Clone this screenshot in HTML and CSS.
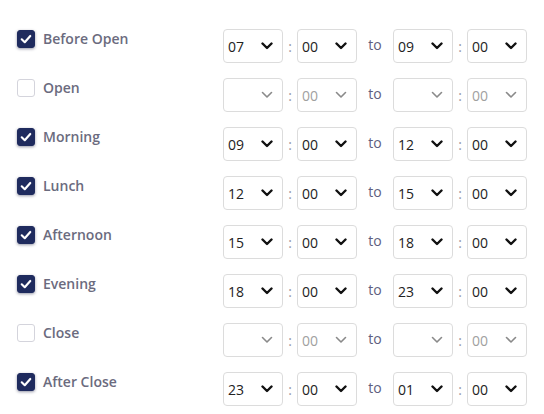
FILE: index.html
```html
<!DOCTYPE html>
<html>
<head>
<meta charset="utf-8">
<link rel="stylesheet" href="styles.css">
</head>
<body>
<div class="list">
  <div class="row">
    <label class="opt"><span class="cb on"><svg viewBox="0 0 18 18"><path d="M4.2 9.3 L7.6 12.6 L13.8 5.6"/></svg></span><span class="lbl">Before Open</span></label>
    <div class="times">
      <div class="sel"><span class="val">07</span><svg class="chev" viewBox="0 0 12 8"><path d="M1.5 1.5 L6 6 L10.5 1.5"/></svg></div>
      <span class="colon">:</span>
      <div class="sel"><span class="val">00</span><svg class="chev" viewBox="0 0 12 8"><path d="M1.5 1.5 L6 6 L10.5 1.5"/></svg></div>
      <span class="to">to</span>
      <div class="sel"><span class="val">09</span><svg class="chev" viewBox="0 0 12 8"><path d="M1.5 1.5 L6 6 L10.5 1.5"/></svg></div>
      <span class="colon">:</span>
      <div class="sel"><span class="val">00</span><svg class="chev" viewBox="0 0 12 8"><path d="M1.5 1.5 L6 6 L10.5 1.5"/></svg></div>
    </div>
  </div>
  <div class="row off">
    <label class="opt"><span class="cb"></span><span class="lbl">Open</span></label>
    <div class="times">
      <div class="sel"><span class="val"></span><svg class="chev" viewBox="0 0 12 8"><path d="M1.5 1.5 L6 6 L10.5 1.5"/></svg></div>
      <span class="colon">:</span>
      <div class="sel"><span class="val">00</span><svg class="chev" viewBox="0 0 12 8"><path d="M1.5 1.5 L6 6 L10.5 1.5"/></svg></div>
      <span class="to">to</span>
      <div class="sel"><span class="val"></span><svg class="chev" viewBox="0 0 12 8"><path d="M1.5 1.5 L6 6 L10.5 1.5"/></svg></div>
      <span class="colon">:</span>
      <div class="sel"><span class="val">00</span><svg class="chev" viewBox="0 0 12 8"><path d="M1.5 1.5 L6 6 L10.5 1.5"/></svg></div>
    </div>
  </div>
  <div class="row">
    <label class="opt"><span class="cb on"><svg viewBox="0 0 18 18"><path d="M4.2 9.3 L7.6 12.6 L13.8 5.6"/></svg></span><span class="lbl">Morning</span></label>
    <div class="times">
      <div class="sel"><span class="val">09</span><svg class="chev" viewBox="0 0 12 8"><path d="M1.5 1.5 L6 6 L10.5 1.5"/></svg></div>
      <span class="colon">:</span>
      <div class="sel"><span class="val">00</span><svg class="chev" viewBox="0 0 12 8"><path d="M1.5 1.5 L6 6 L10.5 1.5"/></svg></div>
      <span class="to">to</span>
      <div class="sel"><span class="val">12</span><svg class="chev" viewBox="0 0 12 8"><path d="M1.5 1.5 L6 6 L10.5 1.5"/></svg></div>
      <span class="colon">:</span>
      <div class="sel"><span class="val">00</span><svg class="chev" viewBox="0 0 12 8"><path d="M1.5 1.5 L6 6 L10.5 1.5"/></svg></div>
    </div>
  </div>
  <div class="row">
    <label class="opt"><span class="cb on"><svg viewBox="0 0 18 18"><path d="M4.2 9.3 L7.6 12.6 L13.8 5.6"/></svg></span><span class="lbl">Lunch</span></label>
    <div class="times">
      <div class="sel"><span class="val">12</span><svg class="chev" viewBox="0 0 12 8"><path d="M1.5 1.5 L6 6 L10.5 1.5"/></svg></div>
      <span class="colon">:</span>
      <div class="sel"><span class="val">00</span><svg class="chev" viewBox="0 0 12 8"><path d="M1.5 1.5 L6 6 L10.5 1.5"/></svg></div>
      <span class="to">to</span>
      <div class="sel"><span class="val">15</span><svg class="chev" viewBox="0 0 12 8"><path d="M1.5 1.5 L6 6 L10.5 1.5"/></svg></div>
      <span class="colon">:</span>
      <div class="sel"><span class="val">00</span><svg class="chev" viewBox="0 0 12 8"><path d="M1.5 1.5 L6 6 L10.5 1.5"/></svg></div>
    </div>
  </div>
  <div class="row">
    <label class="opt"><span class="cb on"><svg viewBox="0 0 18 18"><path d="M4.2 9.3 L7.6 12.6 L13.8 5.6"/></svg></span><span class="lbl">Afternoon</span></label>
    <div class="times">
      <div class="sel"><span class="val">15</span><svg class="chev" viewBox="0 0 12 8"><path d="M1.5 1.5 L6 6 L10.5 1.5"/></svg></div>
      <span class="colon">:</span>
      <div class="sel"><span class="val">00</span><svg class="chev" viewBox="0 0 12 8"><path d="M1.5 1.5 L6 6 L10.5 1.5"/></svg></div>
      <span class="to">to</span>
      <div class="sel"><span class="val">18</span><svg class="chev" viewBox="0 0 12 8"><path d="M1.5 1.5 L6 6 L10.5 1.5"/></svg></div>
      <span class="colon">:</span>
      <div class="sel"><span class="val">00</span><svg class="chev" viewBox="0 0 12 8"><path d="M1.5 1.5 L6 6 L10.5 1.5"/></svg></div>
    </div>
  </div>
  <div class="row">
    <label class="opt"><span class="cb on"><svg viewBox="0 0 18 18"><path d="M4.2 9.3 L7.6 12.6 L13.8 5.6"/></svg></span><span class="lbl">Evening</span></label>
    <div class="times">
      <div class="sel"><span class="val">18</span><svg class="chev" viewBox="0 0 12 8"><path d="M1.5 1.5 L6 6 L10.5 1.5"/></svg></div>
      <span class="colon">:</span>
      <div class="sel"><span class="val">00</span><svg class="chev" viewBox="0 0 12 8"><path d="M1.5 1.5 L6 6 L10.5 1.5"/></svg></div>
      <span class="to">to</span>
      <div class="sel"><span class="val">23</span><svg class="chev" viewBox="0 0 12 8"><path d="M1.5 1.5 L6 6 L10.5 1.5"/></svg></div>
      <span class="colon">:</span>
      <div class="sel"><span class="val">00</span><svg class="chev" viewBox="0 0 12 8"><path d="M1.5 1.5 L6 6 L10.5 1.5"/></svg></div>
    </div>
  </div>
  <div class="row off">
    <label class="opt"><span class="cb"></span><span class="lbl">Close</span></label>
    <div class="times">
      <div class="sel"><span class="val"></span><svg class="chev" viewBox="0 0 12 8"><path d="M1.5 1.5 L6 6 L10.5 1.5"/></svg></div>
      <span class="colon">:</span>
      <div class="sel"><span class="val">00</span><svg class="chev" viewBox="0 0 12 8"><path d="M1.5 1.5 L6 6 L10.5 1.5"/></svg></div>
      <span class="to">to</span>
      <div class="sel"><span class="val"></span><svg class="chev" viewBox="0 0 12 8"><path d="M1.5 1.5 L6 6 L10.5 1.5"/></svg></div>
      <span class="colon">:</span>
      <div class="sel"><span class="val">00</span><svg class="chev" viewBox="0 0 12 8"><path d="M1.5 1.5 L6 6 L10.5 1.5"/></svg></div>
    </div>
  </div>
  <div class="row">
    <label class="opt"><span class="cb on"><svg viewBox="0 0 18 18"><path d="M4.2 9.3 L7.6 12.6 L13.8 5.6"/></svg></span><span class="lbl">After Close</span></label>
    <div class="times">
      <div class="sel"><span class="val">23</span><svg class="chev" viewBox="0 0 12 8"><path d="M1.5 1.5 L6 6 L10.5 1.5"/></svg></div>
      <span class="colon">:</span>
      <div class="sel"><span class="val">00</span><svg class="chev" viewBox="0 0 12 8"><path d="M1.5 1.5 L6 6 L10.5 1.5"/></svg></div>
      <span class="to">to</span>
      <div class="sel"><span class="val">01</span><svg class="chev" viewBox="0 0 12 8"><path d="M1.5 1.5 L6 6 L10.5 1.5"/></svg></div>
      <span class="colon">:</span>
      <div class="sel"><span class="val">00</span><svg class="chev" viewBox="0 0 12 8"><path d="M1.5 1.5 L6 6 L10.5 1.5"/></svg></div>
    </div>
  </div>
</div>
</body>
</html>
```
FILE: styles.css
```css
html, body {
  margin: 0;
  padding: 0;
  background: #ffffff;
}
body {
  font-family: "Open Sans", "Noto Sans", sans-serif;
}
.list {
  padding: 29px 0 0 17px;
  display: flex;
  flex-direction: column;
  gap: 15px;
}
.row {
  display: flex;
  align-items: flex-start;
  height: 34px;
}
.opt {
  width: 206px;
  display: flex;
  align-items: center;
  gap: 8px;
  margin-top: 1px;
  height: 18px;
}
.cb {
  width: 18px;
  height: 18px;
  box-sizing: border-box;
  border-radius: 3px;
  border: 1px solid #d4d4dc;
  background: #fff;
  display: flex;
  align-items: center;
  justify-content: center;
  flex: none;
}
.cb.on {
  background: #1f2b5e;
  border-color: #1f2b5e;
  box-shadow: 0 1px 3px rgba(20, 25, 60, 0.45);
}
.cb svg {
  width: 18px;
  height: 18px;
}
.cb svg path {
  fill: none;
  stroke: #fff;
  stroke-width: 2.4;
  stroke-linecap: round;
  stroke-linejoin: round;
}
.lbl {
  font-size: 14px;
  font-weight: 600;
  color: #6b6b7e;
  line-height: 18px;
}
.times {
  display: flex;
  align-items: center;
  height: 34px;
}
.sel {
  width: 60px;
  height: 34px;
  box-sizing: border-box;
  border: 1px solid #dcdcdc;
  border-radius: 4px;
  display: flex;
  align-items: center;
  justify-content: space-between;
  padding: 0 9px 0 4px;
  background: #fff;
}
.val {
  font-family: "Open Sans", "Noto Sans", sans-serif;
  font-size: 14px;
  color: #222;
}
.chev {
  width: 12px;
  height: 8px;
}
.chev path {
  fill: none;
  stroke: #111;
  stroke-width: 2.4;
  stroke-linecap: round;
  stroke-linejoin: round;
}
.colon {
  width: 14px;
  text-align: center;
  font-size: 14px;
  color: #9a9aa4;
}
.to {
  width: 36px;
  text-align: center;
  font-size: 14px;
  color: #5e5e80;
  margin-top: -3px;
}
.row.off .val {
  color: #a0a0a0;
}
.row.off .chev path {
  stroke: #8a8a8a;
  stroke-width: 1.6;
}
```
